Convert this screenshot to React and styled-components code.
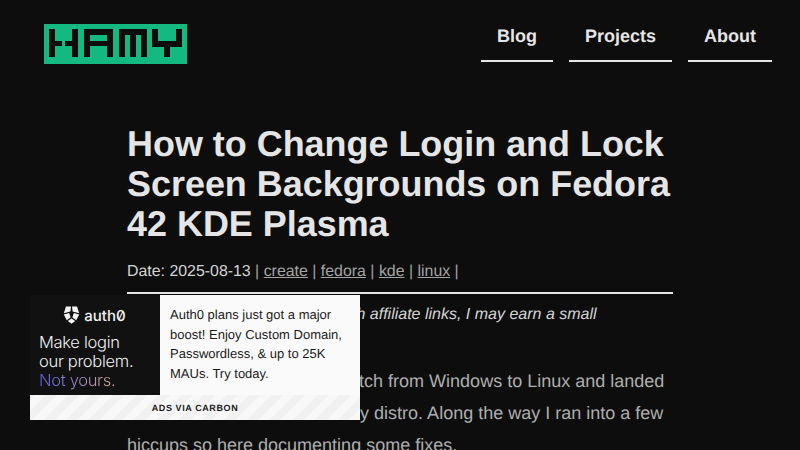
import React from "react"
import styled, { createGlobalStyle } from "styled-components"

const Global = createGlobalStyle`
  html, body {
    margin: 0;
    padding: 0;
    height: 450px;
    overflow: hidden;
    background: #0d0d0d;
    font-family: "Liberation Sans", Arial, sans-serif;
    text-rendering: geometricPrecision;
  }
`

const Page = styled.div`
  width: 800px;
  height: 450px;
  overflow: hidden;
  position: relative;
  background: #0d0d0d;
`

const Header = styled.header`
  display: flex;
  justify-content: space-between;
  align-items: flex-start;
  padding: 24px 28px 0 44px;
  height: 100px;
  box-sizing: border-box;
`

const Nav = styled.nav`
  display: flex;
  gap: 16px;
`

const NavLink = styled.a`
  display: block;
  height: 38px;
  padding: 0 16px;
  box-sizing: border-box;
  line-height: 24px;
  font-size: 18px;
  font-weight: 700;
  color: #e5e5e5;
  border-bottom: 2px solid #e5e5e5;
`

const Main = styled.main`
  width: 546px;
  margin-left: 127px;
`

const Title = styled.h1`
  margin: 0;
  padding-top: 24px;
  font-size: 35.93px;
  line-height: 40px;
  font-weight: 700;
  color: #e5e5e5;
`

const Meta = styled.div`
  margin-top: 16px;
  padding-bottom: 8px;
  border-bottom: 2px solid #e5e5e5;
  font-size: 15.9px;
  line-height: 24px;
  color: #d4d4d4;
`

const Sep = styled.span`
  color: #a3a3a3;
`

const Tag = styled.a`
  color: #a3a3a3;
  text-decoration: underline;
`

const Para = styled.p`
  margin: ${props => props.top}px 0 0;
  font-size: ${props => (props.italic ? 16 : 18)}px;
  line-height: 32px;
  font-style: ${props => (props.italic ? "italic" : "normal")};
  color: ${props => (props.italic ? "#d4d4d4" : "#adadad")};
`

const Ad = styled.aside`
  position: absolute;
  left: 30px;
  top: 295px;
  width: 330px;
  height: 125px;
  display: grid;
  grid-template-columns: 130px 200px;
  grid-template-rows: 100px 25px;
`

const AdImage = styled.div`
  background: #111111;
  padding-top: 10px;
  box-sizing: border-box;
`

const AdBrand = styled.div`
  display: flex;
  align-items: center;
  justify-content: center;
  gap: 4px;
  height: 20px;
  padding-right: 1px;
  color: #f2f2f2;
  font-family: Inter, sans-serif;
  font-size: 15px;
  font-weight: 500;
  font-feature-settings: "zero" 1;
`

const AdHeadline = styled.div`
  margin: 8px 0 0 9px;
  font-family: Inter, sans-serif;
  font-size: 16.5px;
  font-weight: 300;
  line-height: 19px;
  letter-spacing: -0.3px;
  color: #f0f0f0;
`

const NotYours = styled.span`
  background: linear-gradient(90deg, #5c60ea 0%, #9484d0 45%, #dcaa94 100%);
  -webkit-background-clip: text;
  background-clip: text;
  color: transparent;
`

const AdText = styled.div`
  background: #fafafa;
  padding: 10px 10px 0;
  font-size: 13px;
  line-height: 19.5px;
  color: #1a1a1a;
`

const AdFooter = styled.div`
  grid-column: 1 / 3;
  display: flex;
  align-items: center;
  justify-content: center;
  font-size: 9px;
  font-weight: 700;
  letter-spacing: 0.6px;
  color: #1a1a1a;
  background: repeating-linear-gradient(
    -45deg,
    #f8f8f8 0 8px,
    #f1f1f1 8px 16px
  );
`

// logo blocks as x, y, w, h inside the 143x40 badge
const blocks = [
  // H
  [5, 5, 6, 28], [11, 17, 7, 5], [21, 17, 7, 5], [28, 5, 6, 28],
  // A
  [40, 5, 29, 6], [40, 11, 6, 22], [63, 11, 6, 22], [46, 17, 17, 5],
  // M
  [75, 5, 28, 6], [75, 11, 6, 22], [86, 11, 6, 22], [97, 11, 6, 22],
  // Y
  [108, 5, 6, 12], [132, 5, 6, 12], [108, 17, 30, 6], [120, 23, 6, 10],
]

const Logo = () => (
  <svg width="143" height="40" viewBox="0 0 143 40">
    <rect width="143" height="40" fill="#14b981" />
    <g fill="#0d0d0d">
      {blocks.map((b, i) => (
        <rect key={i} x={b[0]} y={b[1]} width={b[2]} height={b[3]} />
      ))}
    </g>
  </svg>
)

const Shield = () => (
  <svg width="17" height="18" viewBox="0 0 17 18" fill="#f5f5f5">
    <path d="M3 .5 8 .5 7.4 5.5 .8 7.2Z" />
    <path d="M14 .5 9 .5 9.6 5.5 16.2 7.2Z" />
    <path d="M.8 8.5 6.2 7 7.6 11.5 3.8 14.3Z" />
    <path d="M16.2 8.5 10.8 7 9.4 11.5 13.2 14.3Z" />
    <path d="M8.5 12.4 12.2 15 8.5 17.7 4.8 15Z" />
  </svg>
)

export default function App() {
  return (
    <Page>
      <Global />
      <Header>
        <Logo />
        <Nav>
          <NavLink>Blog</NavLink>
          <NavLink>Projects</NavLink>
          <NavLink>About</NavLink>
        </Nav>
      </Header>
      <Main>
        <Title>How to Change Login and Lock Screen Backgrounds on Fedora 42 KDE Plasma</Title>
        <Meta>
          Date: 2025-08-13 <Sep>|</Sep> <Tag>create</Tag> <Sep>|</Sep> <Tag>fedora</Tag> <Sep>|</Sep> <Tag>kde</Tag> <Sep>|</Sep> <Tag>linux</Tag> <Sep>|</Sep>
        </Meta>
        <Para italic top={5}>Note: When you buy stuff through affiliate links, I may earn a small commission.</Para>
        <Para top={2}>Recently I made the wise switch from Windows to Linux and landed on Fedora KDE Plasma as my distro. Along the way I ran into a few hiccups so here documenting some fixes.</Para>
      </Main>
      <Ad>
        <AdImage>
          <AdBrand><Shield />auth0</AdBrand>
          <AdHeadline>Make login<br />our problem.<br /><NotYours>Not yours.</NotYours></AdHeadline>
        </AdImage>
        <AdText>Auth0 plans just got a major boost! Enjoy Custom Domain, Passwordless, &amp; up to 25K MAUs. Try today.</AdText>
        <AdFooter>ADS VIA CARBON</AdFooter>
      </Ad>
    </Page>
  )
}
